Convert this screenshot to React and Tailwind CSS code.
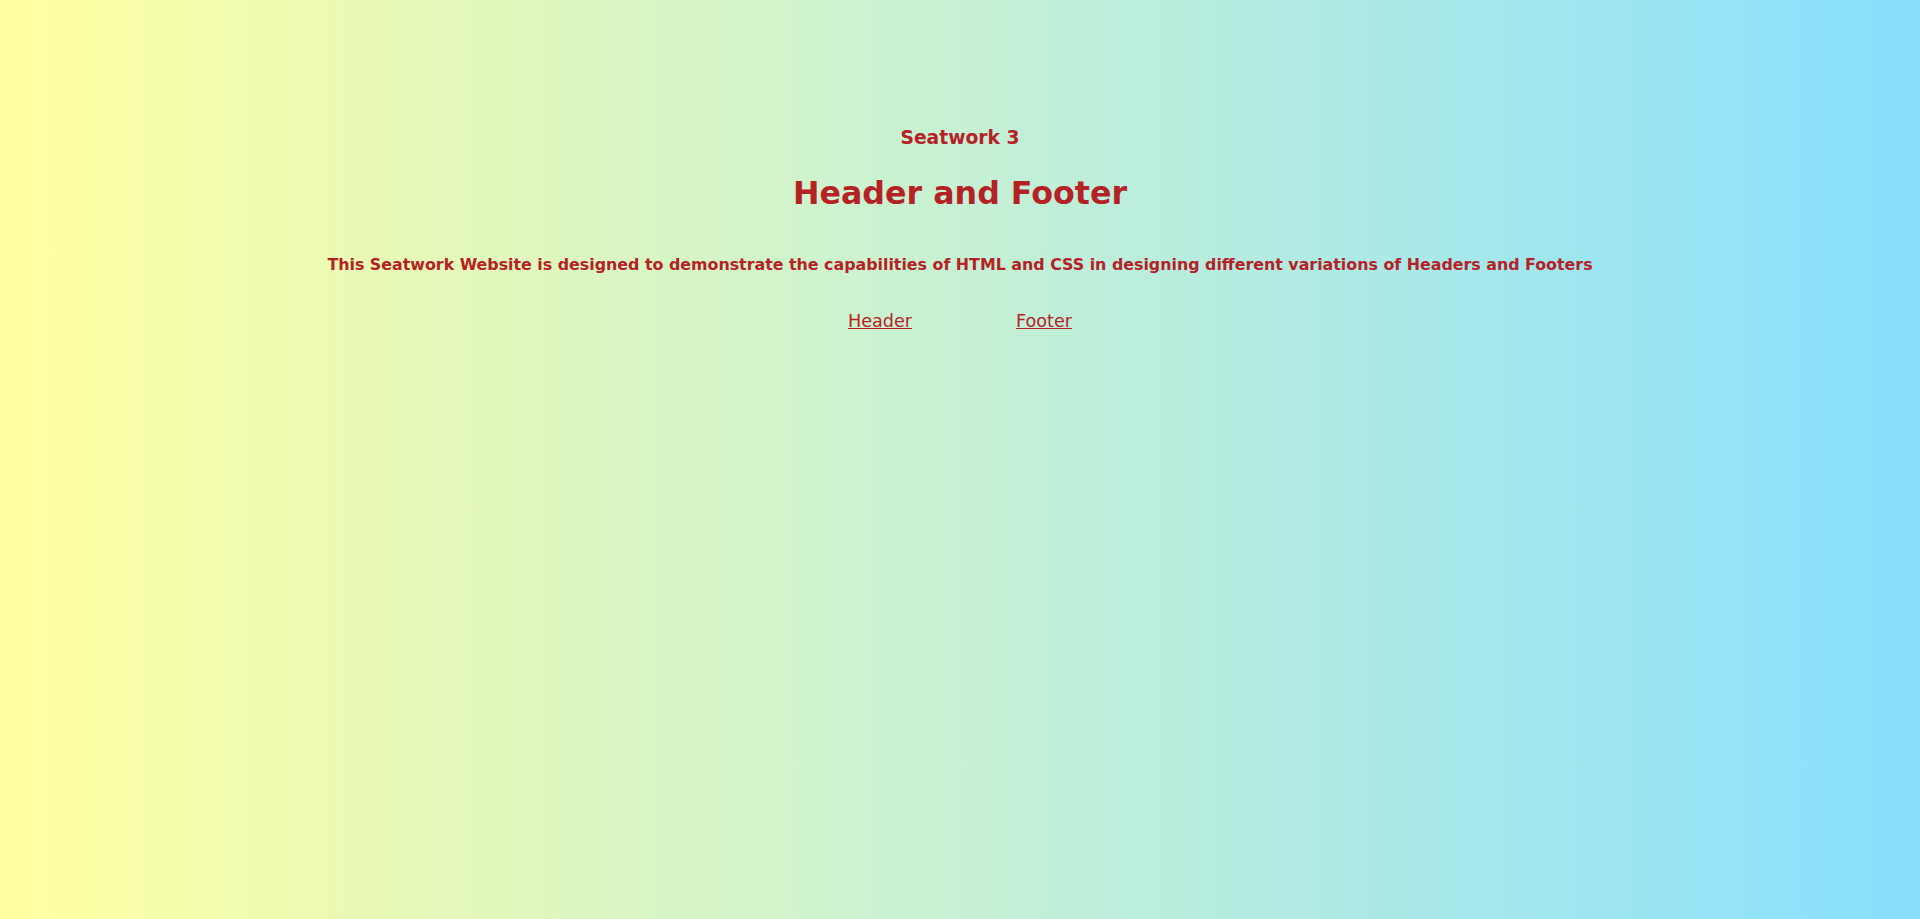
export default function App() {
  return (
    <div
      className="min-h-screen w-full bg-linear-to-r from-[#ffff9f] to-[#87dffd] text-[#b52226] text-center"
      style={{ fontFamily: '"DejaVu Sans", Verdana, sans-serif' }}
    >
      <div className="pt-[127px] flex flex-col items-center">
        <h3 className="text-[18.72px] leading-[22px] font-bold">Seatwork 3</h3>
        <h1 className="mt-[25px] text-[31.7px] leading-[38px] font-bold">Header and Footer</h1>
        <p className="mt-[43px] text-[15.85px] leading-[20px] font-bold">
          This Seatwork Website is designed to demonstrate the capabilities of HTML and CSS in designing different variations of Headers and Footers
        </p>
        <nav className="mt-[35px] flex items-center gap-[104px] text-[17.6px] leading-[22px]">
          <a href="#" className="underline">Header</a>
          <a href="#" className="underline">Footer</a>
        </nav>
      </div>
    </div>
  )
}
